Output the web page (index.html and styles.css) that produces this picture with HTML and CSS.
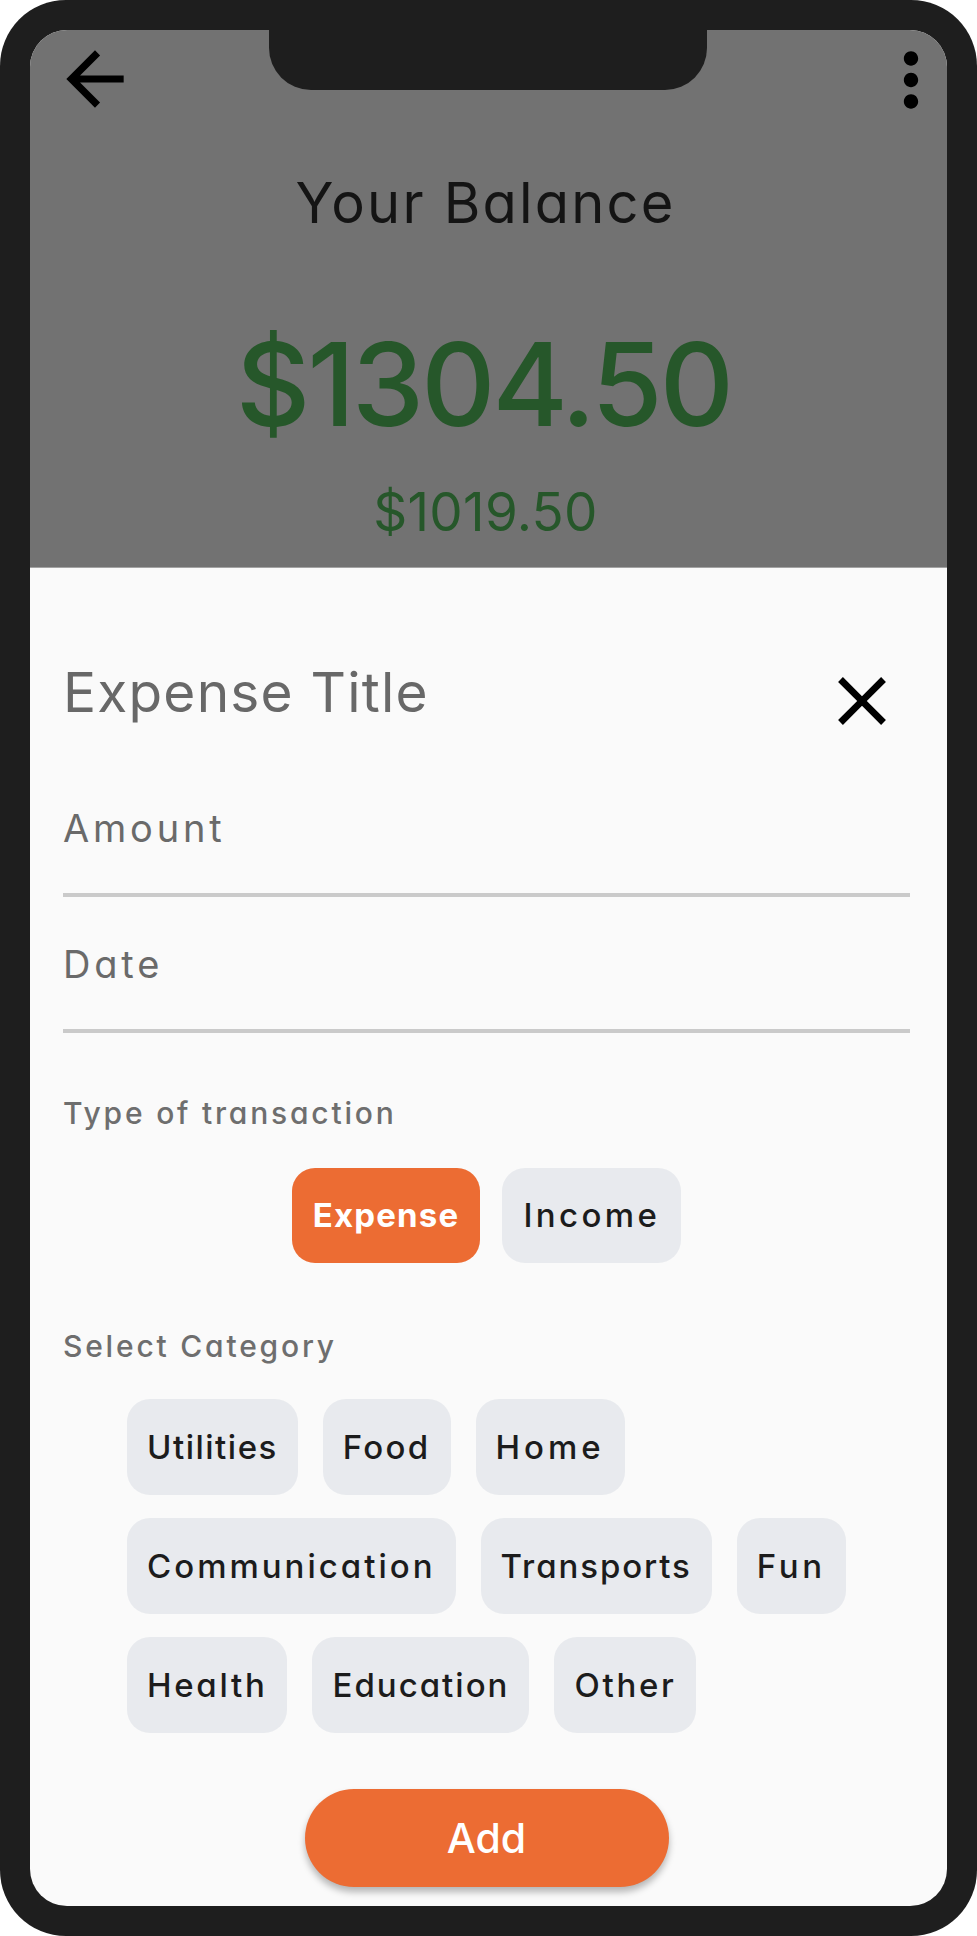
FILE: index.html
```html
<!DOCTYPE html>
<html>
<head>
<meta charset="utf-8">
<title>Add Expense</title>
<link rel="stylesheet" href="styles.css">
</head>
<body>
<div class="phone">
  <div class="screen">
    <div class="notch"></div>
    <header class="balance">
      <div class="toolbar">
        <svg class="tool-icon" viewBox="0 0 24 24" aria-label="Back"><path d="M20 11H7.83l5.59-5.59L12 4l-8 8 8 8 1.41-1.41L7.83 13H20v-2z"/></svg>
        <svg class="tool-icon tool-more" viewBox="0 0 24 24" aria-label="More"><path d="M12 8c1.1 0 2-.9 2-2s-.9-2-2-2-2 .9-2 2 .9 2 2 2zm0 2c-1.1 0-2 .9-2 2s.9 2 2 2 2-.9 2-2-.9-2-2-2zm0 6c-1.1 0-2 .9-2 2s.9 2 2 2 2-.9 2-2-.9-2-2-2z"/></svg>
      </div>
      <h1 class="balance-label">Your Balance</h1>
      <p class="balance-amount">$1304.50</p>
      <p class="balance-sub">$1019.50</p>
    </header>
    <section class="sheet">
      <div class="sheet-head">
        <span class="title-input">Expense Title</span>
        <svg class="close-icon" viewBox="0 0 24 24" aria-label="Close"><path d="M19 6.41L17.59 5 12 10.59 6.41 5 5 6.41 10.59 12 5 17.59 6.41 19 12 13.41 17.59 19 19 17.59 13.41 12z"/></svg>
      </div>
      <div class="field field-first"><span class="hint">Amount</span></div>
      <div class="field"><span class="hint">Date</span></div>
      <p class="label label-type">Type of transaction</p>
      <div class="types">
        <span class="chip chip-active">Expense</span>
        <span class="chip chip-income">Income</span>
      </div>
      <p class="label label-cat">Select Category</p>
      <div class="chips">
        <span class="chip chip-utilities">Utilities</span>
        <span class="chip chip-food">Food</span>
        <span class="chip chip-home">Home</span>
        <span class="chip chip-communication">Communication</span>
        <span class="chip chip-transports">Transports</span>
        <span class="chip chip-fun">Fun</span>
        <span class="chip">Health</span>
        <span class="chip chip-education">Education</span>
        <span class="chip">Other</span>
      </div>
      <button class="add-btn">Add</button>
    </section>
  </div>
</div>
</body>
</html>
```

FILE: styles.css
```css
* { box-sizing: border-box; }
html, body { margin: 0; padding: 0; background: #ffffff; }
body {
  font-family: Inter, "Open Sans", sans-serif;
  font-feature-settings: "cv11";
}
.phone {
  width: 977px;
  height: 1936px;
  background: #1e1e1e;
  border-radius: 66px;
  padding: 30px;
}
.screen {
  position: relative;
  width: 917px;
  height: 1876px;
  border-radius: 37px;
  overflow: hidden;
  background: #fafafa;
  display: flex;
  flex-direction: column;
}
.notch {
  position: absolute;
  left: 239px;
  top: 0;
  width: 438px;
  height: 60px;
  background: #1e1e1e;
  border-radius: 0 0 42px 42px;
}
.balance {
  height: 538px;
  flex: none;
  background: #727272;
  border-bottom: 1px solid #a3a3a3;
  text-align: center;
  padding-right: 6px;
}
.toolbar {
  display: flex;
  justify-content: space-between;
  align-items: flex-start;
  padding: 6px 0 0 22px;
  margin-right: -13px;
}
.tool-icon {
  width: 86px;
  height: 86px;
  fill: #000;
  display: block;
  flex: none;
}
.tool-more { margin-top: 1px; }
.balance-label {
  margin: 52px 0 0;
  font-size: 56px;
  line-height: 1;
  font-weight: 400;
  letter-spacing: 2.2px;
  color: #141414;
}
.balance-amount {
  margin: 96px 0 0;
  padding-right: 4px;
  font-size: 115px;
  line-height: 1;
  font-weight: 500;
  letter-spacing: -3px;
  color: #26572a;
}
.balance-sub {
  margin: 44px 0 0;
  font-size: 53px;
  line-height: 1;
  font-weight: 400;
  letter-spacing: 0.3px;
  color: #26572a;
}
.sheet {
  flex: 1;
  padding: 92px 37px 0 33px;
}
.sheet-head {
  display: flex;
  justify-content: space-between;
  align-items: flex-start;
  height: 82px;
}
.title-input {
  margin-top: 5px;
  font-size: 55px;
  line-height: 1;
  letter-spacing: 1.2px;
  color: #686868;
}
.close-icon {
  width: 82px;
  height: 82px;
  margin-right: 7px;
  fill: #000;
  display: block;
}
.field {
  margin-top: 48px;
  padding-bottom: 46px;
  border-bottom: 4px solid #cacaca;
}
.field-first { margin-top: 67px; }
.hint {
  display: block;
  font-size: 38px;
  line-height: 1;
  letter-spacing: 3.8px;
  color: #6a6a6a;
}
.label {
  margin: 0;
  font-size: 30px;
  line-height: 1;
  font-weight: 500;
  letter-spacing: 2.8px;
  color: #6e6e6e;
}
.label-type { margin-top: 65px; }
.label-cat { margin-top: 68px; }
.types {
  margin-top: 40px;
  display: flex;
  justify-content: center;
  gap: 22px;
}
.chip {
  height: 96px;
  padding: 0 20px;
  display: flex;
  align-items: center;
  border-radius: 23px;
  background: #e8eaee;
  color: #1c1c1c;
  font-size: 33px;
  line-height: 1;
  font-weight: 500;
  letter-spacing: 2.7px;
}
.types .chip {
  height: 95px;
  padding: 0 21px;
}
.chip-active {
  background: #ec6c33;
  color: #ffffff;
  font-weight: 700;
  letter-spacing: 1.2px;
}
.chip-income { letter-spacing: 3.4px; }
.chip-utilities { letter-spacing: 1.5px; }
.chip-food { letter-spacing: 2.3px; }
.chip-home { letter-spacing: 4px; }
.chip-communication { letter-spacing: 3px; }
.chip-transports { letter-spacing: 1.9px; }
.chip-fun { letter-spacing: 3.6px; }
.chip-education { letter-spacing: 2px; }
.chips {
  margin: 38px 0 0 64px;
  display: flex;
  flex-wrap: wrap;
  gap: 23px 25px;
}
.add-btn {
  display: block;
  margin: 56px auto 0;
  width: 364px;
  height: 98px;
  border: none;
  border-radius: 49px;
  background: #ec6c33;
  color: #ffffff;
  font-family: Inter, "Open Sans", sans-serif;
  font-feature-settings: "cv11";
  font-size: 41px;
  line-height: 1;
  font-weight: 500;
  box-shadow: 0 5px 7px rgba(0, 0, 0, 0.28);
  padding: 0;
}
```
